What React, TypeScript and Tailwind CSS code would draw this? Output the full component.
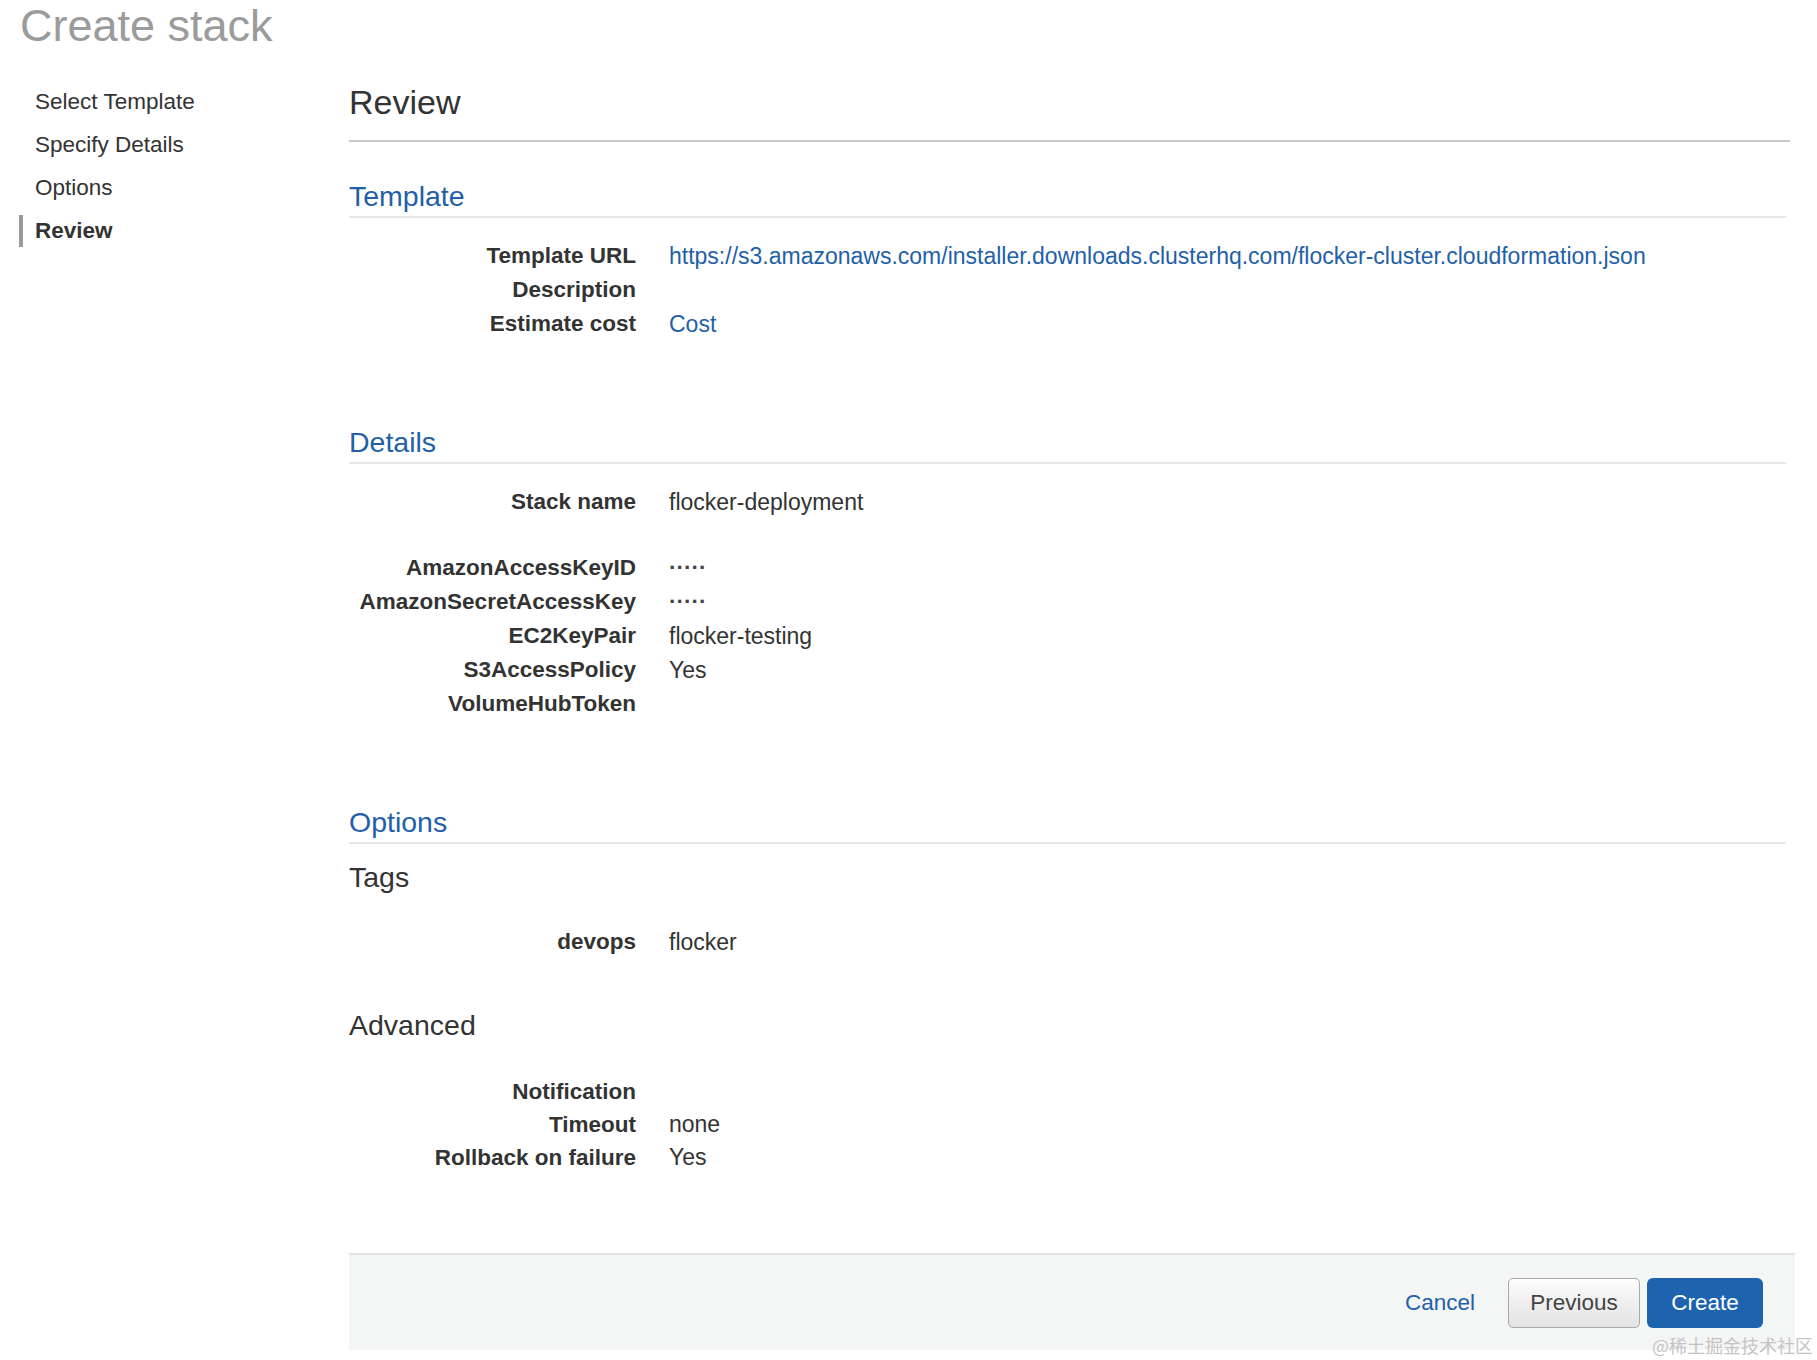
import React from 'react';

interface Row {
  label: string;
  value?: string;
  link?: boolean;
  masked?: boolean;
}

const steps = [
  { label: 'Select Template', active: false },
  { label: 'Specify Details', active: false },
  { label: 'Options', active: false },
  { label: 'Review', active: true },
];

const templateRows: Row[] = [
  {
    label: 'Template URL',
    value: 'https://s3.amazonaws.com/installer.downloads.clusterhq.com/flocker-cluster.cloudformation.json',
    link: true,
  },
  { label: 'Description' },
  { label: 'Estimate cost', value: 'Cost', link: true },
];

const paramRows: Row[] = [
  { label: 'AmazonAccessKeyID', value: '·····', masked: true },
  { label: 'AmazonSecretAccessKey', value: '·····', masked: true },
  { label: 'EC2KeyPair', value: 'flocker-testing' },
  { label: 'S3AccessPolicy', value: 'Yes' },
  { label: 'VolumeHubToken' },
];

const advancedRows: Row[] = [
  { label: 'Notification' },
  { label: 'Timeout', value: 'none' },
  { label: 'Rollback on failure', value: 'Yes' },
];

const valueClass = (r: Row) => {
  if (r.link) return 'ml-[33px] whitespace-nowrap text-[23px] text-[#1f60a8]';
  if (r.masked) return 'ml-[33px] whitespace-nowrap text-[22.5px] font-bold text-[#444]';
  return 'ml-[33px] whitespace-nowrap text-[23px] text-[#333]';
};

const Rows: React.FC<{ rows: Row[]; tight?: boolean; className?: string }> = ({ rows, tight, className }) => (
  <div className={className}>
    {rows.map((r) => (
      <div
        key={r.label}
        className={tight ? 'flex h-[33px] items-center leading-[33px]' : 'flex h-[34px] items-center leading-[34px]'}
      >
        <div className="w-[287px] shrink-0 text-right text-[22.5px] font-bold text-[#333]">{r.label}</div>
        <div className={valueClass(r)}>{r.value}</div>
      </div>
    ))}
  </div>
);

const SectionHeading: React.FC<{ title: string; className?: string }> = ({ title, className }) => (
  <h2
    className={`mr-[4px] border-b-2 border-[#e6e6e6] pb-[3px] text-[28.5px] leading-[34px] font-normal text-[#1f60a8] ${className ?? ''}`}
  >
    {title}
  </h2>
);

const App: React.FC = () => {
  return (
    <div className="relative h-[1360px] w-[1817px] overflow-hidden bg-white font-['Liberation_Sans',Arial,sans-serif] text-[22.5px] text-[#333]">
      {/* Page title */}
      <div className="h-[50px] pt-[2px] pl-[20px] text-[45px] leading-[48px] text-[#9b9b9b]">Create stack</div>

      <div className="flex">
        {/* Wizard steps */}
        <nav className="w-[349px] shrink-0 pt-[30px]">
          {steps.map((s) => (
            <div key={s.label} className="flex h-[43px] items-center leading-[43px]">
              <span className={s.active ? 'ml-[19px] h-[32px] w-[4px] bg-[#9b9b9b]' : 'ml-[19px] h-[32px] w-[4px]'} />
              <span className={s.active ? 'ml-[12px] font-bold text-[#333]' : 'ml-[12px] text-[#333]'}>{s.label}</span>
            </div>
          ))}
        </nav>

        {/* Review content */}
        <main className="w-[1441px] shrink-0">
          <h1 className="mt-[32px] border-b-2 border-[#c9c9c9] pb-[18px] text-[34px] leading-[40px] font-normal text-[#333]">
            Review
          </h1>

          <SectionHeading title="Template" className="mt-[37px]" />
          <Rows rows={templateRows} className="mt-[21px]" />

          <SectionHeading title="Details" className="mt-[84px]" />
          <Rows rows={[{ label: 'Stack name', value: 'flocker-deployment' }]} className="mt-[21px]" />
          <Rows rows={paramRows} className="mt-[32px]" />

          <SectionHeading title="Options" className="mt-[84px]" />
          <h3 className="mt-[16px] text-[28.5px] leading-[34px] text-[#333]">Tags</h3>
          <Rows rows={[{ label: 'devops', value: 'flocker' }]} className="mt-[31px]" />
          <h3 className="mt-[49px] text-[28.5px] leading-[34px] text-[#333]">Advanced</h3>
          <Rows rows={advancedRows} tight className="mt-[33px]" />

          {/* Footer actions */}
          <div className="mt-[79px] flex h-[97px] w-[1446px] items-center justify-end border-t-2 border-[#e3e4e4] bg-[#f4f5f5] pr-[32px]">
            <button className="mr-[33px] text-[#1f60a8]">Cancel</button>
            <button className="h-[50px] w-[132px] rounded-[5px] border border-[#a9a9a9] bg-linear-to-b from-[#fcfcfc] to-[#e3e3e3] text-[#444]">
              Previous
            </button>
            <button className="ml-[7px] h-[50px] w-[116px] rounded-[6px] bg-[#1e63ad] text-white">Create</button>
          </div>
        </main>
      </div>

      <div className="absolute top-[1334px] left-[1652px] font-['Noto_Sans_CJK_SC',sans-serif] text-[18px] leading-[22px] text-[#c4c4c4]">
        @稀土掘金技术社区
      </div>
    </div>
  );
};

export default App;
